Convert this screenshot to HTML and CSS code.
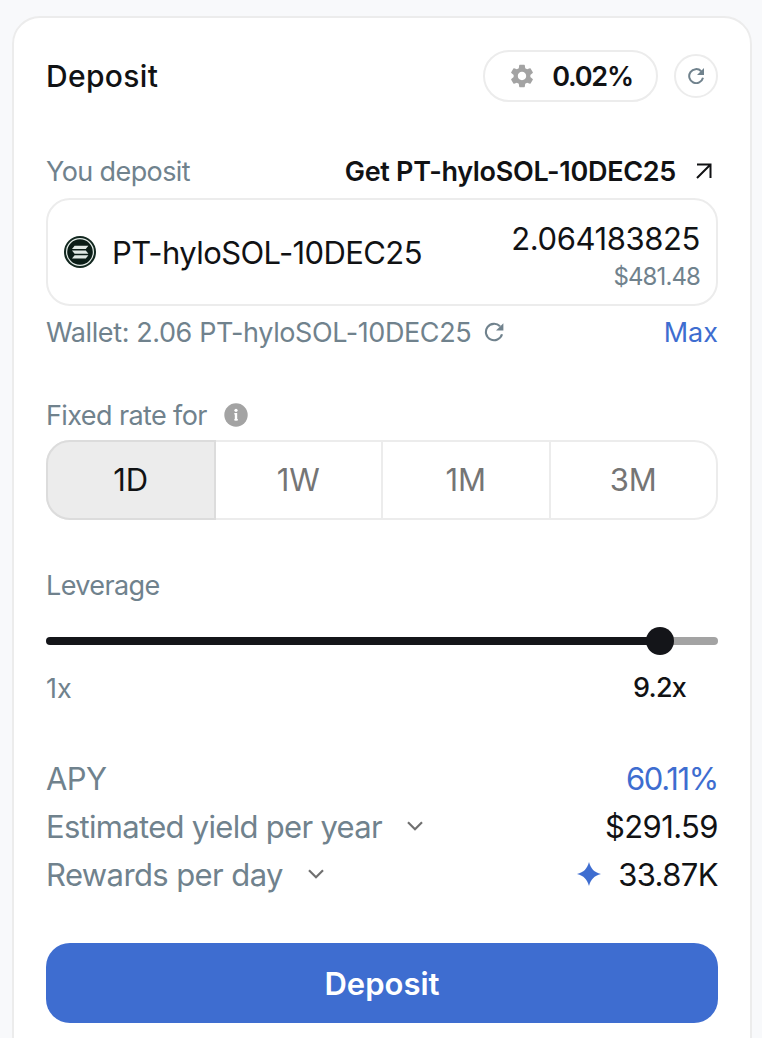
FILE: index.html
```html
<!DOCTYPE html>
<html lang="en">
<head>
  <meta charset="UTF-8" />
  <meta name="viewport" content="width=device-width, initial-scale=1.0"/>
  <title>Deposit</title>
  <link rel="stylesheet" href="styles.css">
</head>
<body>
  <main class="card">
    <header class="card-header">
      <h1 class="title">Deposit</h1>
      <div class="header-actions">
        <button class="slippage">
          <svg class="icon-gear" viewBox="0 0 24 24" width="28" height="28"><path fill="#a3a3a3" d="M19.14 12.94c.04-.3.06-.61.06-.94 0-.32-.02-.64-.07-.94l2.03-1.58c.18-.14.23-.41.12-.61l-1.92-3.32c-.12-.22-.37-.29-.59-.22l-2.39.96c-.5-.38-1.03-.7-1.62-.94l-.36-2.54c-.04-.24-.24-.41-.48-.41h-3.84c-.24 0-.43.17-.47.41l-.36 2.54c-.59.24-1.13.57-1.62.94l-2.39-.96c-.22-.08-.47 0-.59.22L2.74 8.87c-.12.21-.08.47.12.61l2.03 1.58c-.05.3-.09.63-.09.94s.02.64.07.94l-2.03 1.58c-.18.14-.23.41-.12.61l1.92 3.32c.12.22.37.29.59.22l2.39-.96c.5.38 1.03.7 1.62.94l.36 2.54c.05.24.24.41.48.41h3.84c.24 0 .44-.17.47-.41l.36-2.54c.59-.24 1.13-.56 1.62-.94l2.39.96c.22.08.47 0 .59-.22l1.92-3.32c.12-.22.07-.47-.12-.61l-2.01-1.58zM12 15.6c-1.98 0-3.6-1.62-3.6-3.6s1.62-3.6 3.6-3.6 3.6 1.62 3.6 3.6-1.62 3.6-3.6 3.6z"/></svg>
          <span>0.02%</span>
        </button>
        <button class="refresh" aria-label="Refresh">
          <svg viewBox="0 0 16 16" width="16" height="16"><path d="M15 9.8A7 7 0 1 1 13.2 3.2" fill="none" stroke="#70828d" stroke-width="2"/><path d="M16 0V7H9z" fill="#70828d"/></svg>
        </button>
      </div>
    </header>

    <div class="row deposit-label">
      <span class="label you-deposit">You deposit</span>
      <a class="get-link"><span>Get PT-hyloSOL-10DEC25</span>
        <svg viewBox="0 0 16 16" width="16" height="16"><path d="M1 1.5h13.5V15M14.5 1.5L1 15" fill="none" stroke="#111214" stroke-width="2"/></svg>
      </a>
    </div>

    <div class="amount-box">
      <div class="token">
        <svg viewBox="0 0 32 32" width="32" height="32">
          <circle cx="16" cy="16" r="16" fill="#12271f"/>
          <circle cx="16" cy="16" r="13.4" fill="#0b1d17" stroke="#e3ebe7" stroke-width="1.2"/>
          <g fill="#dfe8e4">
            <path d="M10.6 9.8h13.8l-2.6 3.2H8z"/>
            <path d="M8 14.5h13.8l2.6 3.2H10.6z"/>
            <path d="M10.6 19.2h13.8l-2.6 3.2H8z"/>
          </g>
        </svg>
        <span class="token-name">PT-hyloSOL-10DEC25</span>
      </div>
      <div class="amount">
        <span class="amount-value">2.064183825</span>
        <span class="amount-usd">$481.48</span>
      </div>
    </div>

    <div class="row wallet-row">
      <span class="wallet"><span>Wallet: 2.06 PT-hyloSOL-10DEC25</span>
        <svg viewBox="0 0 20 20" width="20" height="20"><path d="M18 12.3A8.2 8.2 0 1 1 16 4.3" fill="none" stroke="#70828d" stroke-width="2.1"/><path d="M19.4 1.2V8.6H12z" fill="#70828d"/></svg>
      </span>
      <a class="max">Max</a>
    </div>

    <div class="fixed-label">
      <span class="label fixed-rate">Fixed rate for</span>
      <svg viewBox="0 0 24 24" width="24" height="24"><circle cx="12" cy="12" r="11.7" fill="#a3a3a3"/><circle cx="12" cy="7.3" r="1.6" fill="#fff"/><path d="M10.4 10.8H12v6.4M10.4 16.7h3.4" fill="none" stroke="#fff" stroke-width="1.6"/><path d="M12 10v7.4" stroke="#fff" stroke-width="2.4"/></svg>
    </div>
    <div class="terms">
      <button class="term active">1D</button>
      <button class="term">1W</button>
      <button class="term">1M</button>
      <button class="term">3M</button>
    </div>

    <div class="label leverage-label">Leverage</div>
    <div class="slider">
      <div class="slider-fill"></div>
      <div class="slider-thumb"></div>
      <div class="slider-rest"></div>
    </div>
    <div class="row slider-values">
      <span class="slider-min">1x</span>
      <span class="slider-current">9.2x</span>
    </div>

    <div class="stats">
      <div class="row stat">
        <span class="stat-name apy">APY</span>
        <span class="stat-value apy-value">60.11%</span>
      </div>
      <div class="row stat">
        <span class="stat-name yield"><span>Estimated yield per year</span>
          <svg viewBox="0 0 16 10" width="16" height="10"><path d="M1 1.3l7 7 7-7" fill="none" stroke="#707070" stroke-width="2.2"/></svg>
        </span>
        <span class="stat-value yield-value">$291.59</span>
      </div>
      <div class="row stat">
        <span class="stat-name rewards"><span>Rewards per day</span>
          <svg viewBox="0 0 16 10" width="16" height="10"><path d="M1 1.3l7 7 7-7" fill="none" stroke="#707070" stroke-width="2.2"/></svg>
        </span>
        <span class="stat-value rewards-value">
          <svg viewBox="0 0 24 24" width="24" height="24"><path d="M12 0C14 7 17 10 24 12C17 14 14 17 12 24C10 17 7 14 0 12C7 10 10 7 12 0z" fill="#3e6dd0"/></svg>
          <span>33.87K</span>
        </span>
      </div>
    </div>

    <button class="submit">Deposit</button>
  </main>
</body>
</html>
```

FILE: styles.css
```css
* {
  box-sizing: border-box;
}

body {
  margin: 0;
  padding: 16px 10px 0 12px;
  height: 1038px;
  overflow: hidden;
  background: #f8f9fb;
  color: #111214;
  font-family: Inter, "Liberation Sans", sans-serif;
}

button {
  margin: 0;
  padding: 0;
  border: none;
  background: none;
  color: inherit;
  font-family: inherit;
}

svg {
  display: block;
  flex: none;
}

span {
  white-space: nowrap;
}

.card {
  height: 1060px;
  padding: 32px;
  background: #fff;
  border: 2px solid #ececec;
  border-radius: 28px;
}

.card-header,
.row {
  display: flex;
  align-items: center;
  justify-content: space-between;
}

.card-header {
  height: 52px;
}

.title {
  margin: 0;
  font-size: 30px;
  font-weight: 500;
  letter-spacing: 0.35px;
}

.header-actions {
  display: flex;
  align-items: center;
  gap: 16px;
}

.slippage {
  display: flex;
  align-items: center;
  justify-content: center;
  gap: 16px;
  width: 175px;
  height: 52px;
  border: 2px solid #ececec;
  border-radius: 26px;
  font-size: 27px;
  font-weight: 600;
  letter-spacing: -1.2px;
}

.refresh {
  display: flex;
  align-items: center;
  justify-content: center;
  width: 44px;
  height: 44px;
  border: 2px solid #ececec;
  border-radius: 50%;
}

.label,
.wallet,
.slider-min {
  color: #70828d;
  font-size: 27px;
}

.label {
  letter-spacing: -0.6px;
}

.deposit-label {
  height: 34px;
  margin-top: 52px;
}

.get-link {
  display: flex;
  align-items: center;
  gap: 20px;
  padding-right: 6px;
  font-size: 27px;
  font-weight: 600;
  letter-spacing: -0.3px;
}

.amount-box {
  display: flex;
  align-items: center;
  justify-content: space-between;
  height: 108px;
  margin-top: 10px;
  padding: 0 16px;
  border: 2px solid #ececec;
  border-radius: 24px;
}

.token {
  display: flex;
  align-items: center;
  gap: 16px;
}

.token-name,
.amount-value {
  font-size: 31px;
}

.token-name {
  letter-spacing: -0.6px;
}

.amount {
  display: flex;
  flex-direction: column;
  align-items: flex-end;
  padding-top: 9px;
}

.amount-value {
  line-height: 40px;
  letter-spacing: -0.4px;
}

.amount-usd {
  color: #70828d;
  font-size: 24px;
  line-height: 36px;
  letter-spacing: -0.9px;
}

.wallet-row {
  height: 36px;
  margin-top: 8px;
}

.wallet {
  display: flex;
  align-items: center;
  gap: 13px;
  letter-spacing: -0.4px;
}

.max {
  color: #3e6dd0;
  font-size: 27px;
}

.fixed-label {
  display: flex;
  align-items: center;
  gap: 17px;
  height: 34px;
  margin-top: 48px;
}

.terms {
  display: flex;
  height: 80px;
  margin-top: 8px;
  border: 2px solid #ececec;
  border-radius: 24px;
}

.term {
  flex: 1;
  padding-bottom: 2px;
  color: #757575;
  font-size: 31px;
  border-right: 2px solid #ececec;
}

.term:last-child {
  border-right: none;
}

.term.active {
  margin: -2px 0 -2px -2px;
  background: #ececec;
  color: #111214;
  border: 2px solid #dcdcdc;
  border-radius: 24px 0 0 24px;
}

.leverage-label {
  height: 34px;
  margin-top: 49px;
  line-height: 34px;
}

.slider {
  display: flex;
  align-items: center;
  height: 28px;
  margin-top: 24px;
}

.slider-fill {
  width: 602px;
  height: 8px;
  margin-right: -2px;
  background: #141519;
  border-radius: 4px 0 0 4px;
}

.slider-thumb {
  z-index: 1;
  width: 28px;
  height: 28px;
  background: #141519;
  border-radius: 50%;
}

.slider-rest {
  flex: 1;
  height: 8px;
  margin-left: -2px;
  background: #a3a3a3;
  border-radius: 0 4px 4px 0;
}

.slider-values {
  height: 34px;
  margin-top: 16px;
  padding-right: 32px;
}

.slider-current {
  padding-bottom: 2px;
  font-size: 27px;
  font-weight: 500;
  letter-spacing: -0.8px;
}

.stats {
  margin-top: 49px;
}

.stat {
  height: 48px;
  font-size: 31px;
  letter-spacing: -0.6px;
}

.stat-name,
.rewards-value {
  display: flex;
  align-items: center;
}

.stat-name {
  gap: 25px;
  color: #70828d;
}

.yield {
  letter-spacing: -0.7px;
}

.rewards-value {
  gap: 17px;
}

.apy-value {
  color: #3e6dd0;
  letter-spacing: -1.3px;
}

.submit {
  display: block;
  width: 100%;
  height: 80px;
  margin-top: 45px;
  background: #3e6dd0;
  color: #fff;
  font-size: 31px;
  font-weight: 600;
  border-radius: 24px;
}
```
